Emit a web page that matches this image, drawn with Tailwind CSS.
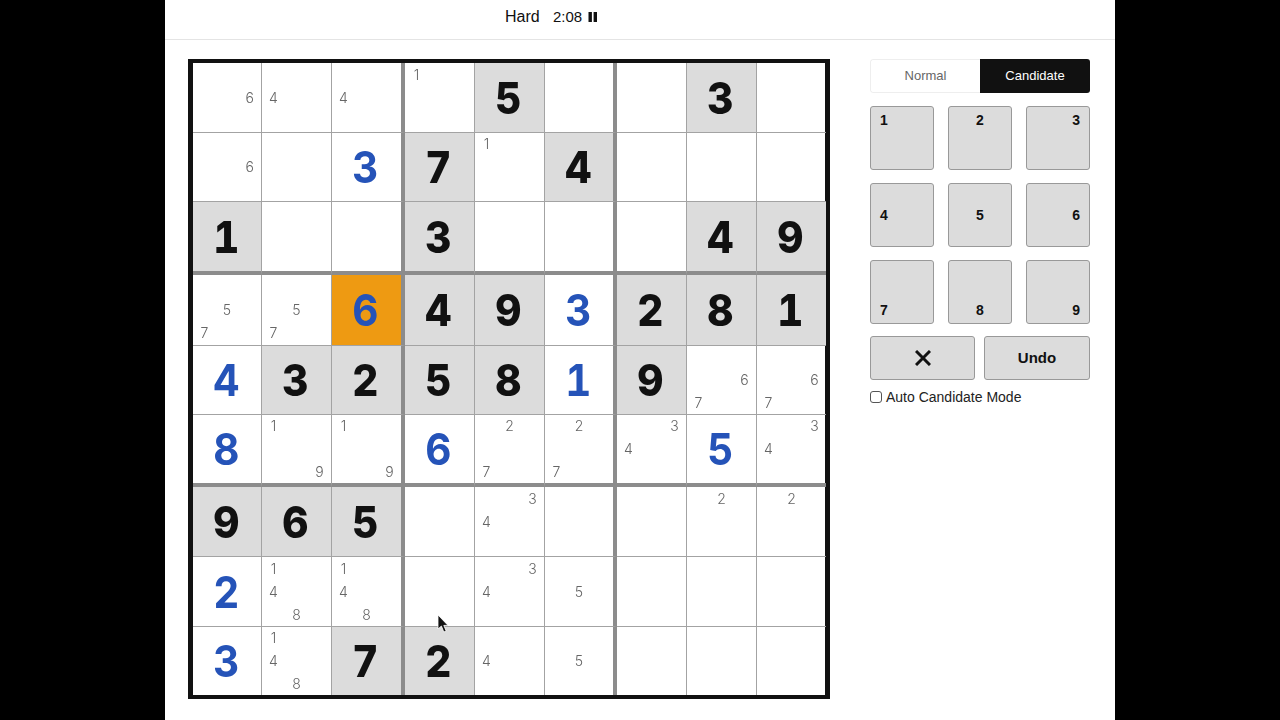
<!DOCTYPE html>
<html><head><meta charset="utf-8"><title>Sudoku</title>
<script src="https://cdn.jsdelivr.net/npm/@tailwindcss/browser@4"></script></head>
<body class="bg-black h-[720px] overflow-hidden font-['Liberation_Sans',sans-serif]">
<div class="relative mx-auto w-[950px] h-[720px] bg-white">
<header class="h-[40px] border-b border-[#e4e4e4] flex items-center text-[#111] pl-[340px] pb-[5px]">
<span class="text-[16px] w-[48px]">Hard</span>
<span class="text-[15px] w-[35px]">2:08</span>
<svg class="w-[10px] h-[10px]" viewBox="0 0 10 10"><path fill="#111" d="M0.5 0h3.4v10H0.5zM5.6 0H9v10H5.6z"/></svg>
</header>
<main class="flex pl-[23px] pt-[19px]">
<div class="will-change-transform w-[642px] h-[640px] border-[5px] border-t-[4px] border-b-[4px] border-[#111] grid grid-cols-[69px_70px_73px_70px_70px_72px_70px_70px_69px] grid-rows-[70px_69px_73px_71px_69px_72px_70px_70px_68px] font-['Inter',sans-serif] text-[14px] font-light text-[#666] leading-none">
<!-- row 1 -->
<div class="grid grid-cols-3 grid-rows-3 place-items-center border-r border-b border-[#a3a3a3]"><span class="col-start-3 row-start-2">6</span></div>
<div class="grid grid-cols-3 grid-rows-3 place-items-center border-r border-b border-[#a3a3a3]"><span class="col-start-1 row-start-2">4</span></div>
<div class="grid grid-cols-3 grid-rows-3 place-items-center border-r-4 border-b border-r-[#8c8c8c] border-b-[#a3a3a3]"><span class="col-start-1 row-start-2">4</span></div>
<div class="grid grid-cols-3 grid-rows-3 place-items-center border-r border-b border-[#a3a3a3]"><span class="col-start-1 row-start-1">1</span></div>
<div class="flex items-center justify-center bg-[#dcdcdc] text-[44px] font-extrabold text-[#111] border-r border-b border-[#a3a3a3]"><span class="tabular-nums scale-x-[.92] -translate-x-[1px]">5</span></div>
<div class="border-r-4 border-b border-r-[#8c8c8c] border-b-[#a3a3a3]"></div>
<div class="border-r border-b border-[#a3a3a3]"></div>
<div class="flex items-center justify-center bg-[#dcdcdc] text-[44px] font-extrabold text-[#111] border-r border-b border-[#a3a3a3]"><span class="tabular-nums scale-x-[.92] -translate-x-[1px]">3</span></div>
<div class="border-b border-[#a3a3a3]"></div>
<!-- row 2 -->
<div class="grid grid-cols-3 grid-rows-3 place-items-center border-r border-b border-[#a3a3a3]"><span class="col-start-3 row-start-2">6</span></div>
<div class="border-r border-b border-[#a3a3a3]"></div>
<div class="flex items-center justify-center text-[44px] font-bold text-[#2553b8] border-r-4 border-b border-r-[#8c8c8c] border-b-[#a3a3a3]"><span class="tabular-nums scale-x-[.92] -translate-x-[1px]">3</span></div>
<div class="flex items-center justify-center bg-[#dcdcdc] text-[44px] font-extrabold text-[#111] border-r border-b border-[#a3a3a3]"><span class="tabular-nums scale-x-[.92] -translate-x-[1px]">7</span></div>
<div class="grid grid-cols-3 grid-rows-3 place-items-center border-r border-b border-[#a3a3a3]"><span class="col-start-1 row-start-1">1</span></div>
<div class="flex items-center justify-center bg-[#dcdcdc] text-[44px] font-extrabold text-[#111] border-r-4 border-b border-r-[#8c8c8c] border-b-[#a3a3a3]"><span class="tabular-nums scale-x-[.92] -translate-x-[1px]">4</span></div>
<div class="border-r border-b border-[#a3a3a3]"></div>
<div class="border-r border-b border-[#a3a3a3]"></div>
<div class="border-b border-[#a3a3a3]"></div>
<!-- row 3 -->
<div class="flex items-center justify-center bg-[#dcdcdc] text-[44px] font-extrabold text-[#111] border-r border-b-4 border-r-[#a3a3a3] border-b-[#8c8c8c]"><span class="tabular-nums scale-x-[.92] -translate-x-[1px]">1</span></div>
<div class="border-r border-b-4 border-r-[#a3a3a3] border-b-[#8c8c8c]"></div>
<div class="border-r-4 border-b-4 border-[#8c8c8c]"></div>
<div class="flex items-center justify-center bg-[#dcdcdc] text-[44px] font-extrabold text-[#111] border-r border-b-4 border-r-[#a3a3a3] border-b-[#8c8c8c]"><span class="tabular-nums scale-x-[.92] -translate-x-[1px]">3</span></div>
<div class="border-r border-b-4 border-r-[#a3a3a3] border-b-[#8c8c8c]"></div>
<div class="border-r-4 border-b-4 border-[#8c8c8c]"></div>
<div class="border-r border-b-4 border-r-[#a3a3a3] border-b-[#8c8c8c]"></div>
<div class="flex items-center justify-center bg-[#dcdcdc] text-[44px] font-extrabold text-[#111] border-r border-b-4 border-r-[#a3a3a3] border-b-[#8c8c8c]"><span class="tabular-nums scale-x-[.92] -translate-x-[1px]">4</span></div>
<div class="flex items-center justify-center bg-[#dcdcdc] text-[44px] font-extrabold text-[#111] border-b-4 border-[#8c8c8c]"><span class="tabular-nums scale-x-[.92] -translate-x-[1px]">9</span></div>
<!-- row 4 -->
<div class="grid grid-cols-3 grid-rows-3 place-items-center border-r border-b border-[#a3a3a3]"><span class="col-start-2 row-start-2">5</span><span class="col-start-1 row-start-3">7</span></div>
<div class="grid grid-cols-3 grid-rows-3 place-items-center border-r border-b border-[#a3a3a3]"><span class="col-start-2 row-start-2">5</span><span class="col-start-1 row-start-3">7</span></div>
<div class="flex items-center justify-center bg-[#ee9a12] text-[44px] font-bold text-[#2553b8] border-r-4 border-b border-r-[#8c8c8c] border-b-[#a3a3a3]"><span class="tabular-nums scale-x-[.92] -translate-x-[1px]">6</span></div>
<div class="flex items-center justify-center bg-[#dcdcdc] text-[44px] font-extrabold text-[#111] border-r border-b border-[#a3a3a3]"><span class="tabular-nums scale-x-[.92] -translate-x-[1px]">4</span></div>
<div class="flex items-center justify-center bg-[#dcdcdc] text-[44px] font-extrabold text-[#111] border-r border-b border-[#a3a3a3]"><span class="tabular-nums scale-x-[.92] -translate-x-[1px]">9</span></div>
<div class="flex items-center justify-center text-[44px] font-bold text-[#2553b8] border-r-4 border-b border-r-[#8c8c8c] border-b-[#a3a3a3]"><span class="tabular-nums scale-x-[.92] -translate-x-[1px]">3</span></div>
<div class="flex items-center justify-center bg-[#dcdcdc] text-[44px] font-extrabold text-[#111] border-r border-b border-[#a3a3a3]"><span class="tabular-nums scale-x-[.92] -translate-x-[1px]">2</span></div>
<div class="flex items-center justify-center bg-[#dcdcdc] text-[44px] font-extrabold text-[#111] border-r border-b border-[#a3a3a3]"><span class="tabular-nums scale-x-[.92] -translate-x-[1px]">8</span></div>
<div class="flex items-center justify-center bg-[#dcdcdc] text-[44px] font-extrabold text-[#111] border-b border-[#a3a3a3]"><span class="tabular-nums scale-x-[.92] -translate-x-[1px]">1</span></div>
<!-- row 5 -->
<div class="flex items-center justify-center text-[44px] font-bold text-[#2553b8] border-r border-b border-[#a3a3a3]"><span class="tabular-nums scale-x-[.92] -translate-x-[1px]">4</span></div>
<div class="flex items-center justify-center bg-[#dcdcdc] text-[44px] font-extrabold text-[#111] border-r border-b border-[#a3a3a3]"><span class="tabular-nums scale-x-[.92] -translate-x-[1px]">3</span></div>
<div class="flex items-center justify-center bg-[#dcdcdc] text-[44px] font-extrabold text-[#111] border-r-4 border-b border-r-[#8c8c8c] border-b-[#a3a3a3]"><span class="tabular-nums scale-x-[.92] -translate-x-[1px]">2</span></div>
<div class="flex items-center justify-center bg-[#dcdcdc] text-[44px] font-extrabold text-[#111] border-r border-b border-[#a3a3a3]"><span class="tabular-nums scale-x-[.92] -translate-x-[1px]">5</span></div>
<div class="flex items-center justify-center bg-[#dcdcdc] text-[44px] font-extrabold text-[#111] border-r border-b border-[#a3a3a3]"><span class="tabular-nums scale-x-[.92] -translate-x-[1px]">8</span></div>
<div class="flex items-center justify-center text-[44px] font-bold text-[#2553b8] border-r-4 border-b border-r-[#8c8c8c] border-b-[#a3a3a3]"><span class="tabular-nums scale-x-[.92] -translate-x-[1px]">1</span></div>
<div class="flex items-center justify-center bg-[#dcdcdc] text-[44px] font-extrabold text-[#111] border-r border-b border-[#a3a3a3]"><span class="tabular-nums scale-x-[.92] -translate-x-[1px]">9</span></div>
<div class="grid grid-cols-3 grid-rows-3 place-items-center border-r border-b border-[#a3a3a3]"><span class="col-start-3 row-start-2">6</span><span class="col-start-1 row-start-3">7</span></div>
<div class="grid grid-cols-3 grid-rows-3 place-items-center border-b border-[#a3a3a3]"><span class="col-start-3 row-start-2">6</span><span class="col-start-1 row-start-3">7</span></div>
<!-- row 6 -->
<div class="flex items-center justify-center text-[44px] font-bold text-[#2553b8] border-r border-b-4 border-r-[#a3a3a3] border-b-[#8c8c8c]"><span class="tabular-nums scale-x-[.92] -translate-x-[1px]">8</span></div>
<div class="grid grid-cols-3 grid-rows-3 place-items-center border-r border-b-4 border-r-[#a3a3a3] border-b-[#8c8c8c]"><span class="col-start-1 row-start-1">1</span><span class="col-start-3 row-start-3">9</span></div>
<div class="grid grid-cols-3 grid-rows-3 place-items-center border-r-4 border-b-4 border-[#8c8c8c]"><span class="col-start-1 row-start-1">1</span><span class="col-start-3 row-start-3">9</span></div>
<div class="flex items-center justify-center text-[44px] font-bold text-[#2553b8] border-r border-b-4 border-r-[#a3a3a3] border-b-[#8c8c8c]"><span class="tabular-nums scale-x-[.92] -translate-x-[1px]">6</span></div>
<div class="grid grid-cols-3 grid-rows-3 place-items-center border-r border-b-4 border-r-[#a3a3a3] border-b-[#8c8c8c]"><span class="col-start-2 row-start-1">2</span><span class="col-start-1 row-start-3">7</span></div>
<div class="grid grid-cols-3 grid-rows-3 place-items-center border-r-4 border-b-4 border-[#8c8c8c]"><span class="col-start-2 row-start-1">2</span><span class="col-start-1 row-start-3">7</span></div>
<div class="grid grid-cols-3 grid-rows-3 place-items-center border-r border-b-4 border-r-[#a3a3a3] border-b-[#8c8c8c]"><span class="col-start-3 row-start-1">3</span><span class="col-start-1 row-start-2">4</span></div>
<div class="flex items-center justify-center text-[44px] font-bold text-[#2553b8] border-r border-b-4 border-r-[#a3a3a3] border-b-[#8c8c8c]"><span class="tabular-nums scale-x-[.92] -translate-x-[1px]">5</span></div>
<div class="grid grid-cols-3 grid-rows-3 place-items-center border-b-4 border-[#8c8c8c]"><span class="col-start-3 row-start-1">3</span><span class="col-start-1 row-start-2">4</span></div>
<!-- row 7 -->
<div class="flex items-center justify-center bg-[#dcdcdc] text-[44px] font-extrabold text-[#111] border-r border-b border-[#a3a3a3]"><span class="tabular-nums scale-x-[.92] -translate-x-[1px]">9</span></div>
<div class="flex items-center justify-center bg-[#dcdcdc] text-[44px] font-extrabold text-[#111] border-r border-b border-[#a3a3a3]"><span class="tabular-nums scale-x-[.92] -translate-x-[1px]">6</span></div>
<div class="flex items-center justify-center bg-[#dcdcdc] text-[44px] font-extrabold text-[#111] border-r-4 border-b border-r-[#8c8c8c] border-b-[#a3a3a3]"><span class="tabular-nums scale-x-[.92] -translate-x-[1px]">5</span></div>
<div class="border-r border-b border-[#a3a3a3]"></div>
<div class="grid grid-cols-3 grid-rows-3 place-items-center border-r border-b border-[#a3a3a3]"><span class="col-start-3 row-start-1">3</span><span class="col-start-1 row-start-2">4</span></div>
<div class="border-r-4 border-b border-r-[#8c8c8c] border-b-[#a3a3a3]"></div>
<div class="border-r border-b border-[#a3a3a3]"></div>
<div class="grid grid-cols-3 grid-rows-3 place-items-center border-r border-b border-[#a3a3a3]"><span class="col-start-2 row-start-1">2</span></div>
<div class="grid grid-cols-3 grid-rows-3 place-items-center border-b border-[#a3a3a3]"><span class="col-start-2 row-start-1">2</span></div>
<!-- row 8 -->
<div class="flex items-center justify-center text-[44px] font-bold text-[#2553b8] border-r border-b border-[#a3a3a3]"><span class="tabular-nums scale-x-[.92] -translate-x-[1px]">2</span></div>
<div class="grid grid-cols-3 grid-rows-3 place-items-center border-r border-b border-[#a3a3a3]"><span class="col-start-1 row-start-1">1</span><span class="col-start-1 row-start-2">4</span><span class="col-start-2 row-start-3">8</span></div>
<div class="grid grid-cols-3 grid-rows-3 place-items-center border-r-4 border-b border-r-[#8c8c8c] border-b-[#a3a3a3]"><span class="col-start-1 row-start-1">1</span><span class="col-start-1 row-start-2">4</span><span class="col-start-2 row-start-3">8</span></div>
<div class="border-r border-b border-[#a3a3a3]"></div>
<div class="grid grid-cols-3 grid-rows-3 place-items-center border-r border-b border-[#a3a3a3]"><span class="col-start-3 row-start-1">3</span><span class="col-start-1 row-start-2">4</span></div>
<div class="grid grid-cols-3 grid-rows-3 place-items-center border-r-4 border-b border-r-[#8c8c8c] border-b-[#a3a3a3]"><span class="col-start-2 row-start-2">5</span></div>
<div class="border-r border-b border-[#a3a3a3]"></div>
<div class="border-r border-b border-[#a3a3a3]"></div>
<div class="border-b border-[#a3a3a3]"></div>
<!-- row 9 -->
<div class="flex items-center justify-center text-[44px] font-bold text-[#2553b8] border-r border-[#a3a3a3]"><span class="tabular-nums scale-x-[.92] -translate-x-[1px]">3</span></div>
<div class="grid grid-cols-3 grid-rows-3 place-items-center border-r border-[#a3a3a3]"><span class="col-start-1 row-start-1">1</span><span class="col-start-1 row-start-2">4</span><span class="col-start-2 row-start-3">8</span></div>
<div class="flex items-center justify-center bg-[#dcdcdc] text-[44px] font-extrabold text-[#111] border-r-4 border-[#8c8c8c]"><span class="tabular-nums scale-x-[.92] -translate-x-[1px]">7</span></div>
<div class="flex items-center justify-center bg-[#dcdcdc] text-[44px] font-extrabold text-[#111] border-r border-[#a3a3a3]"><span class="tabular-nums scale-x-[.92] -translate-x-[1px]">2</span></div>
<div class="grid grid-cols-3 grid-rows-3 place-items-center border-r border-[#a3a3a3]"><span class="col-start-1 row-start-2">4</span></div>
<div class="grid grid-cols-3 grid-rows-3 place-items-center border-r-4 border-[#8c8c8c]"><span class="col-start-2 row-start-2">5</span></div>
<div class="border-r border-[#a3a3a3]"></div>
<div class="border-r border-[#a3a3a3]"></div>
<div></div>
</div>
<aside class="ml-[40px] w-[220px]">
<div class="flex h-[34px] text-[13px] rounded-[3px] overflow-hidden">
<div class="w-[110px] flex items-center justify-center border border-r-0 border-[#eee] rounded-l-[3px] text-[#666]">Normal</div>
<div class="w-[110px] flex items-center justify-center bg-[#111] text-white">Candidate</div>
</div>
<div class="grid grid-cols-[64px_64px_64px] justify-between gap-y-[13px] mt-[13px] text-[14px] font-bold text-[#111]">
<button class="h-[64px] flex justify-start items-start px-[9px] py-[3px] bg-[#dcdcdc] border border-[#999] rounded-[3px]">1</button>
<button class="h-[64px] flex justify-center items-start px-[10px] py-[3px] bg-[#dcdcdc] border border-[#999] rounded-[3px]">2</button>
<button class="h-[64px] flex justify-end items-start px-[9px] py-[3px] bg-[#dcdcdc] border border-[#999] rounded-[3px]">3</button>
<button class="h-[64px] flex justify-start items-center px-[9px] py-[6px] bg-[#dcdcdc] border border-[#999] rounded-[3px]">4</button>
<button class="h-[64px] flex justify-center items-center px-[10px] py-[6px] bg-[#dcdcdc] border border-[#999] rounded-[3px]">5</button>
<button class="h-[64px] flex justify-end items-center px-[9px] py-[6px] bg-[#dcdcdc] border border-[#999] rounded-[3px]">6</button>
<button class="h-[64px] flex justify-start items-end px-[9px] py-[2px] bg-[#dcdcdc] border border-[#999] rounded-[3px]">7</button>
<button class="h-[64px] flex justify-center items-end px-[10px] py-[2px] bg-[#dcdcdc] border border-[#999] rounded-[3px]">8</button>
<button class="h-[64px] flex justify-end items-end px-[9px] py-[2px] bg-[#dcdcdc] border border-[#999] rounded-[3px]">9</button>
</div>
<div class="flex justify-between mt-[12px]">
<button class="w-[105px] h-[44px] flex items-center justify-center bg-[#dcdcdc] border border-[#999] rounded-[3px]">
<svg class="w-[16px] h-[16px]" viewBox="0 0 16 16"><path d="M1 1l14 14M15 1L1 15" stroke="#111" stroke-width="3" fill="none"/></svg>
</button>
<button class="w-[106px] h-[44px] pt-[1px] flex items-center justify-center bg-[#dcdcdc] border border-[#999] rounded-[3px] text-[15px] font-bold text-[#111]">Undo</button>
</div>
<label class="flex items-center mt-[8px] text-[14px] text-[#222] h-[18px]">
<input type="checkbox" class="appearance-none w-[12px] h-[12px] border border-[#555] rounded-[3px] bg-white">
<span class="ml-[4px]">Auto Candidate Mode</span>
</label>
</aside>
</main>
<svg class="absolute left-[272px] top-[614px] w-[12px] h-[19px]" viewBox="0 0 12 19"><path d="M1 1v14l3.4-3 2.4 6 2.4-1-2.4-5.6H11z" fill="#111" stroke="#fff" stroke-width="0.8"/></svg>
</div>
</body></html>
